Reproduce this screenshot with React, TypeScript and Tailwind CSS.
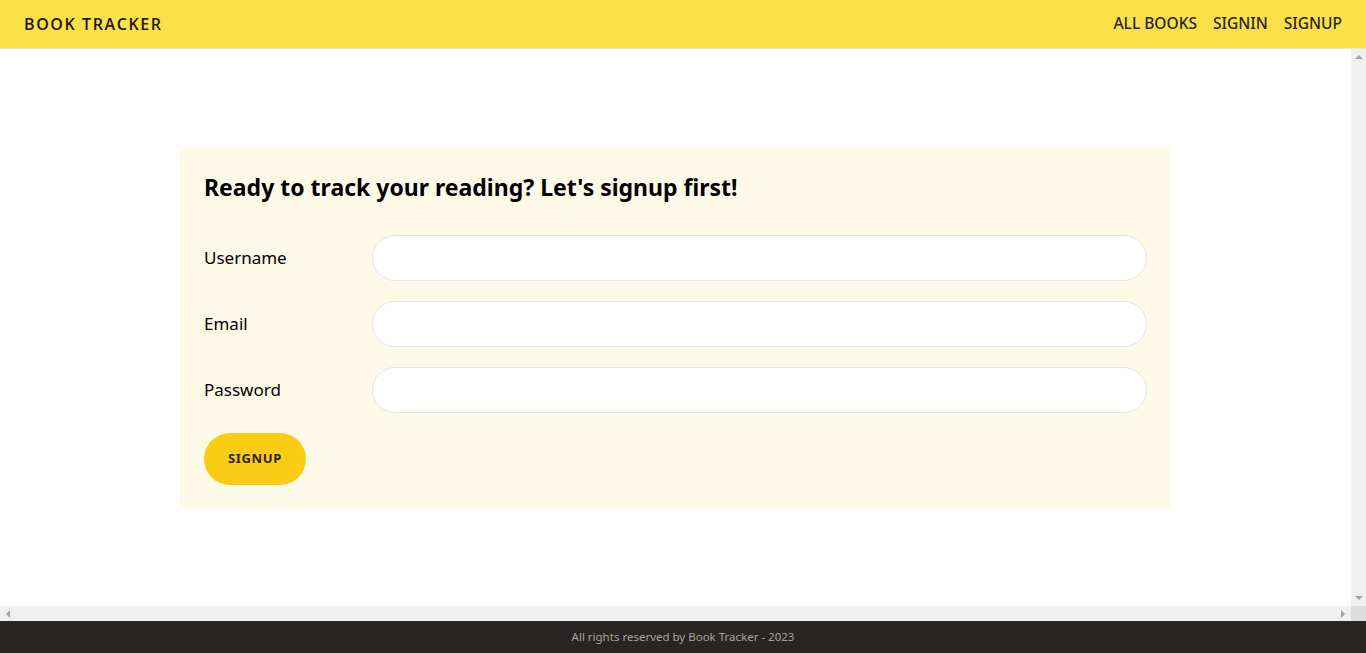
import React from 'react';

const bodyFont = { fontFamily: '"Noto Sans", "Open Sans", sans-serif' };

// tiny scrollbar arrow triangles
function Arrow({ dir }: { dir: 'up' | 'down' | 'left' | 'right' }) {
  const pts = {
    up: '4,1 8,5 0,5',
    down: '0,1 8,1 4,5',
    left: '1,4 5,0 5,8',
    right: '1,0 5,4 1,8',
  }[dir];
  const vertical = dir === 'up' || dir === 'down';
  return (
    <svg width={vertical ? 8 : 6} height={vertical ? 6 : 8} viewBox={vertical ? '0 0 8 6' : '0 0 6 8'}>
      <polygon points={pts} fill="#a3a3a3" />
    </svg>
  );
}

export default function App() {
  const fields = [
    { label: 'Username', type: 'text' },
    { label: 'Email', type: 'email' },
    { label: 'Password', type: 'password' },
  ];

  return (
    <div className="h-screen flex flex-col bg-white" style={bodyFont}>
      {/* header */}
      <header className="h-[49px] shrink-0 bg-[#fde047] border-b border-[#e5e5e5] flex items-center justify-between px-6">
        <span
          className="text-[16px] font-semibold tracking-[0.1em] text-[#1c1917]"
          style={{ fontFamily: '"Open Sans", sans-serif' }}
        >
          BOOK TRACKER
        </span>
        <nav className="flex items-center gap-4 text-[15.5px] font-medium text-[#292524]">
          <a href="#">ALL BOOKS</a>
          <a href="#">SIGNIN</a>
          <a href="#">SIGNUP</a>
        </nav>
      </header>

      {/* content with scrollbars */}
      <div className="flex-1 flex flex-col min-h-0">
        <div className="flex-1 flex min-h-0">
          <main className="flex-1 flex items-center justify-center">
            <form className="w-[991px] bg-[#fefae8] rounded-md p-6" onSubmit={(e) => e.preventDefault()}>
              <h1 className="text-[23px] leading-[32px] font-bold text-black mb-8">
                Ready to track your reading? Let's signup first!
              </h1>
              <div className="flex flex-col gap-5">
                {fields.map((f) => (
                  <div key={f.label} className="flex items-center">
                    <label className="w-[168px] shrink-0 text-[17px] text-black">{f.label}</label>
                    <input
                      type={f.type}
                      className="flex-1 h-[46px] rounded-full bg-white border border-[#e5e5e5] px-5 outline-none"
                    />
                  </div>
                ))}
                <div>
                  <button
                    type="submit"
                    className="h-[52px] px-6 rounded-full bg-[#facc15] text-[13px] font-bold tracking-wider text-[#292524]"
                  >
                    SIGNUP
                  </button>
                </div>
              </div>
            </form>
          </main>
          <div className="w-[15px] bg-[#f0f0f0] flex flex-col items-center justify-between py-[5px]">
            <Arrow dir="up" />
            <Arrow dir="down" />
          </div>
        </div>
        <div className="h-[15px] flex shrink-0">
          <div className="flex-1 bg-[#f0f0f0] flex items-center justify-between px-[5px]">
            <Arrow dir="left" />
            <Arrow dir="right" />
          </div>
          <div className="w-[15px] bg-[#dcdcdc]" />
        </div>
      </div>

      {/* footer */}
      <footer className="h-8 shrink-0 bg-[#292524] flex items-center justify-center text-[11.5px] text-[#a8a29e]">
        All rights reserved by Book Tracker - 2023
      </footer>
    </div>
  );
}
